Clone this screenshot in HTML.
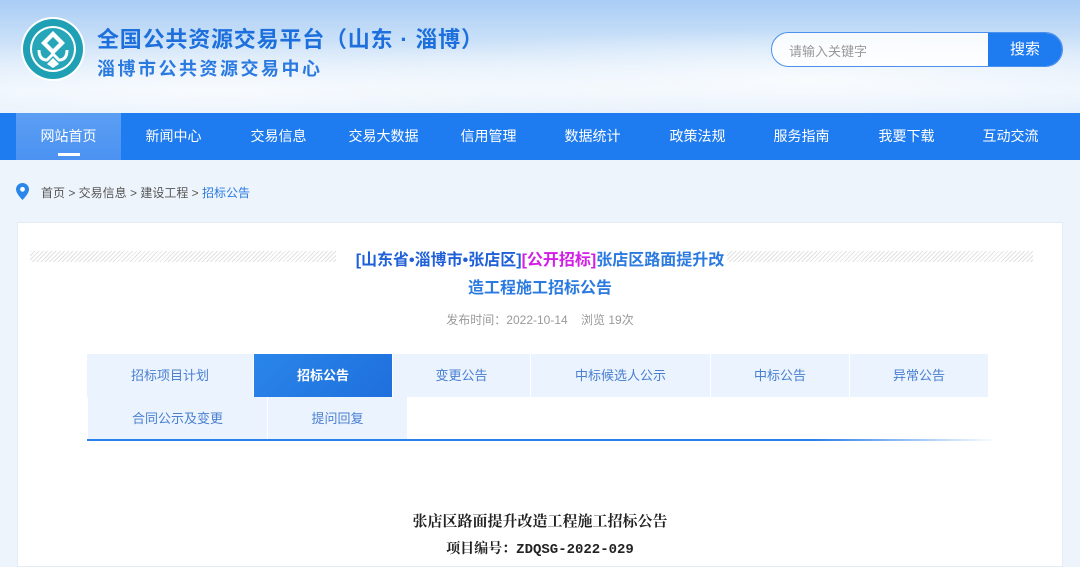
<!DOCTYPE html>
<html><head><meta charset="utf-8"><style>
*{margin:0;padding:0;box-sizing:border-box}
body{width:1080px;height:561px;overflow:hidden;background:#eef4fc;font-family:"Liberation Sans","Noto Sans CJK SC",sans-serif;position:relative}
.hdr{position:absolute;left:0;top:0;width:1080px;height:113px;background:linear-gradient(180deg,#a9cdf5 0%,#d2e5f9 45%,#e8f2fc 80%,#e2eefb 100%)}
.hdr:after{content:"";position:absolute;left:0;top:0;right:0;bottom:0;background:radial-gradient(ellipse at 75% 70%,rgba(255,255,255,.8),rgba(255,255,255,0) 45%),radial-gradient(ellipse at 20% 80%,rgba(255,255,255,.7),rgba(255,255,255,0) 40%)}
.abs{position:absolute;z-index:2}
.t1{left:97px;top:22px;font-size:22px;font-weight:bold;color:#1c6fdc;letter-spacing:0.8px;white-space:nowrap}
.t2{left:97px;top:55px;font-size:18px;font-weight:bold;color:#2a7ae0;letter-spacing:2.5px;white-space:nowrap}
.search{left:771px;top:32px;width:292px;height:35px;border:1px solid #4a90ec;border-radius:18px;background:rgba(255,255,255,.85);overflow:hidden}
.search span{position:absolute;left:17px;top:8px;font-size:13px;color:#999}
.search b{position:absolute;right:0;top:0;width:74px;height:35px;background:#1f7bf0;color:#fff;font-weight:normal;font-size:15px;text-align:center;line-height:33px}
.nav{position:absolute;left:0;top:113px;width:1080px;height:47px;background:#1f7bf0}
.nav div{position:absolute;top:0;height:47px;width:105px;text-align:center;line-height:47px;color:#fff;font-size:14px}
.nav .on{background:linear-gradient(180deg,#5b9ef3,#4b92f2)}
.nav .on:after{content:"";position:absolute;left:42px;bottom:4px;width:22px;height:3px;background:#fff}
.bc{left:41px;top:184px;font-size:12px;color:#555}
.card{position:absolute;left:17px;top:222px;width:1046px;height:345px;background:#fff;border:1px solid #e3ebf5}
.hatch{position:absolute;top:251px;height:11px;background:repeating-linear-gradient(135deg,#e2e2e2 0 1px,#fff 1px 3px)}
.ti{left:0;width:1080px;text-align:center;font-size:16px;font-weight:bold;color:#2a7ae0}
.tab{position:absolute;height:43px;background:#eaf3fe;color:#4a7fd0;font-size:13px;text-align:center;line-height:43px}
.tab.act{background:linear-gradient(135deg,#2a86ea,#1f6fdc);color:#fff;font-weight:bold}
</style></head><body>
<div class="hdr"></div>
<svg class="abs" style="left:20px;top:16px" width="66" height="66" viewBox="0 0 66 66">
<circle cx="33" cy="33" r="32" fill="#fff"/><circle cx="33" cy="33" r="30" fill="#1fa0b4"/><circle cx="33" cy="33" r="23" fill="#fff"/>
<circle cx="33" cy="33" r="21" fill="#26a6b8"/>
<path d="M33 15 L45 27 L33 39 L21 27Z" fill="#fff"/><path d="M33 21 L39 27 L33 33 L27 27Z" fill="#26a6b8"/>
<path d="M19 34 Q19 44 27 44 L33 38 L39 44 Q47 44 47 34" stroke="#fff" stroke-width="3" fill="none"/>
<path d="M33 42 L39 48 L33 52 L27 48Z" fill="#fff"/>
</svg>
<div class="abs t1">全国公共资源交易平台（山东 · 淄博）</div>
<div class="abs t2">淄博市公共资源交易中心</div>
<div class="abs search"><span>请输入关键字</span><b>搜索</b></div>
<div class="nav">
<div class="on" style="left:16px">网站首页</div><div style="left:121px">新闻中心</div><div style="left:226px">交易信息</div><div style="left:331px">交易大数据</div><div style="left:436px">信用管理</div><div style="left:540px">数据统计</div><div style="left:645px">政策法规</div><div style="left:749px">服务指南</div><div style="left:854px">我要下载</div><div style="left:958px">互动交流</div>
</div>
<svg class="abs" style="left:16px;top:183px" width="13" height="17" viewBox="0 0 13 17"><path d="M6.5 0C2.9 0 0 2.8 0 6.3 0 10.8 6.5 17 6.5 17S13 10.8 13 6.3C13 2.8 10.1 0 6.5 0Z" fill="#2a86ea"/><circle cx="6.5" cy="6.3" r="2.4" fill="#fff"/></svg>
<div class="abs bc">首页 &gt; 交易信息 &gt; 建设工程 &gt; <span style="color:#2a7ae0">招标公告</span></div>
<div class="card"></div>
<div class="hatch abs" style="left:30px;width:306px"></div>
<div class="hatch abs" style="left:727px;width:306px"></div>
<div class="abs ti" style="top:246px"><span style="color:#1f5fd8">[山东省•淄博市•张店区]</span><span style="color:#d21ee6">[公开招标]</span>张店区路面提升改</div>
<div class="abs ti" style="top:274px">造工程施工招标公告</div>
<div class="abs" style="left:0;width:1080px;text-align:center;top:311px;font-size:12px;color:#999">发布时间：2022-10-14 &nbsp;&nbsp;&nbsp;浏览 19次</div>
<div class="tab" style="left:87px;top:354px;width:166px">招标项目计划</div>
<div class="tab act" style="left:254px;top:354px;width:138px">招标公告</div>
<div class="tab" style="left:393px;top:354px;width:137px">变更公告</div>
<div class="tab" style="left:531px;top:354px;width:179px">中标候选人公示</div>
<div class="tab" style="left:711px;top:354px;width:138px">中标公告</div>
<div class="tab" style="left:850px;top:354px;width:138px">异常公告</div>
<div class="tab" style="left:88px;top:397px;width:179px">合同公示及变更</div>
<div class="tab" style="left:268px;top:397px;width:139px">提问回复</div>
<div class="abs" style="left:87px;top:439px;width:910px;height:2px;background:linear-gradient(90deg,#2a80ea 0%,#2a80ea 80%,rgba(42,128,234,0) 100%)"></div>
<div class="abs" style="left:0;width:1080px;text-align:center;top:510px;font-size:15px;font-weight:bold;color:#222;font-family:'Liberation Serif','Noto Serif CJK SC',serif">张店区路面提升改造工程施工招标公告</div>
<div class="abs" style="left:0;width:1080px;text-align:center;top:538px;font-size:14px;font-weight:bold;color:#222;font-family:'Liberation Mono','Noto Serif CJK SC',monospace">项目编号：ZDQSG-2022-029</div>
</body></html>
